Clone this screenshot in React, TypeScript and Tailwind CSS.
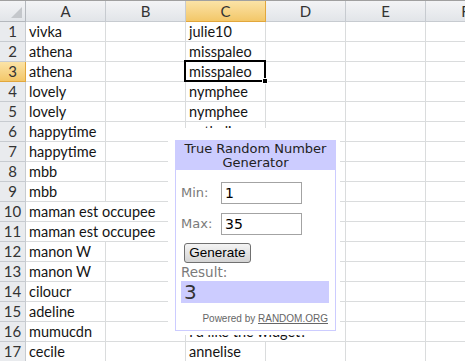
import React from 'react'

const cols = ['A', 'B', 'C', 'D', 'E', 'F']

type Row = { a?: string; c?: string; aWide?: boolean; cWide?: boolean }

const rows: Row[] = [
  { a: 'vivka', c: 'julie10' },
  { a: 'athena', c: 'misspaleo' },
  { a: 'athena', c: 'misspaleo' },
  { a: 'lovely', c: 'nymphee' },
  { a: 'lovely', c: 'nymphee' },
  { a: 'happytime', c: 'nathalie' },
  { a: 'happytime' },
  { a: 'mbb' },
  { a: 'mbb' },
  { a: 'maman est occupee', aWide: true },
  { a: 'maman est occupee', aWide: true },
  { a: 'manon W' },
  { a: 'manon W' },
  { a: 'ciloucr' },
  { a: 'adeline' },
  { a: 'mumucdn', c: "I'd like the widget?", cWide: true },
  { a: 'cecile', c: 'annelise' },
]

const grid = 'grid grid-cols-[26px_80px_80px_80px_80px_80px_80px]'

function Cell({ text, wide, active }: { text?: string; wide?: boolean; active?: boolean }) {
  return (
    <div
      className={
        'relative h-[20px] border-b border-[#dadcdd] pl-[3px] text-[14.5px] leading-[19px] text-[#141414] whitespace-nowrap ' +
        (wide ? '' : 'border-r ') +
        (wide || active ? '' : 'overflow-hidden')
      }
    >
      {text}
      {active && (
        <div className="absolute z-10 -left-[2px] -top-[2px] w-[82px] h-[22px] border-2 border-black">
          <div className="absolute -right-[4px] -bottom-[4px] w-[6px] h-[6px] bg-black border border-white" />
        </div>
      )}
    </div>
  )
}

function Widget() {
  return (
    <div className="absolute z-20 left-[168px] top-[128px] w-[172px] h-[207px] bg-white">
      <div className="ml-[7px] mt-[12px] w-[161px] h-[191px] border border-[#ccccff] font-['DejaVu_Sans',sans-serif]">
        <div className="h-[29px] bg-[#ccccff] pt-[1px] text-center text-[13px] leading-[14px] text-[#222]">
          True Random Number
          <br />
          Generator
        </div>
        <div className="px-[5px]">
          <div className="mt-[12px] flex items-center">
            <span className="w-[40px] text-[13px] text-[#7a7a7a]">Min:</span>
            <div className="w-[81px] h-[22px] border border-[#a3a3a3] pl-[3px] text-[14px] leading-[20px] text-black">1</div>
          </div>
          <div className="mt-[9px] flex items-center">
            <span className="w-[40px] text-[13px] text-[#7a7a7a]">Max:</span>
            <div className="w-[81px] h-[22px] border border-[#a3a3a3] pl-[3px] text-[14px] leading-[20px] text-black">35</div>
          </div>
          <div className="mt-[8px] ml-[3px] w-[67px] h-[20px] rounded-[3px] border border-[#707070] bg-gradient-to-b from-[#f4f4f4] to-[#d4d4d4] text-center font-['Liberation_Sans',sans-serif] text-[13.5px] leading-[18px] text-black">
            Generate
          </div>
          <div className="mt-[1px] text-[13.5px] leading-[16px] text-[#7a7a7a]">Result:</div>
          <div className="mt-[1px] w-[148px] h-[22px] bg-[#ccccff] pl-[3px] text-[20px] leading-[22px] text-[#333]">3</div>
          <div className="mt-[10px] pr-[2px] text-right font-['Liberation_Sans',sans-serif] text-[10px] leading-[11px] text-[#666]">
            Powered by <span className="underline">RANDOM.ORG</span>
          </div>
        </div>
      </div>
    </div>
  )
}

export default function App() {
  return (
    <div className="relative w-[465px] h-[361px] overflow-hidden bg-white font-['Lato',sans-serif]">
      <div className={grid + ' h-[22px] border-t border-[#a0a0a0]'}>
        <div className="relative border-r border-b border-[#b4b8bd] bg-gradient-to-b from-[#f3f4f6] to-[#e2e5e9]">
          <svg className="absolute right-[3px] bottom-[3px]" width="11" height="11" viewBox="0 0 11 11">
            <polygon points="11,0 11,11 0,11" fill="#c4c7cb" />
          </svg>
        </div>
        {cols.map((c) => (
          <div
            key={c}
            className={
              'border-r border-b text-center text-[15px] leading-[20px] ' +
              (c === 'C'
                ? 'bg-gradient-to-b from-[#fbe3a6] to-[#f3c768] border-[#e2a73c] text-[#333]'
                : 'bg-gradient-to-b from-[#f3f4f6] to-[#e2e5e9] border-[#c7cbd0] text-[#333]')
            }
          >
            {c}
          </div>
        ))}
      </div>
      {rows.map((r, i) => (
        <div key={i} className={grid}>
          <div
            className={
              'h-[20px] border-r border-b text-center text-[15px] leading-[19px] text-[#333] ' +
              (i === 2
                ? 'bg-gradient-to-b from-[#fbe3a6] to-[#f3c768] border-[#e2a73c]'
                : 'bg-[#e9ebee] border-[#c7cbd0]')
            }
          >
            {i + 1}
          </div>
          <Cell text={r.a} wide={r.aWide} />
          <Cell />
          <Cell text={r.c} wide={r.cWide} active={i === 2} />
          <Cell />
          <Cell />
          <Cell />
        </div>
      ))}
      <Widget />
    </div>
  )
}
